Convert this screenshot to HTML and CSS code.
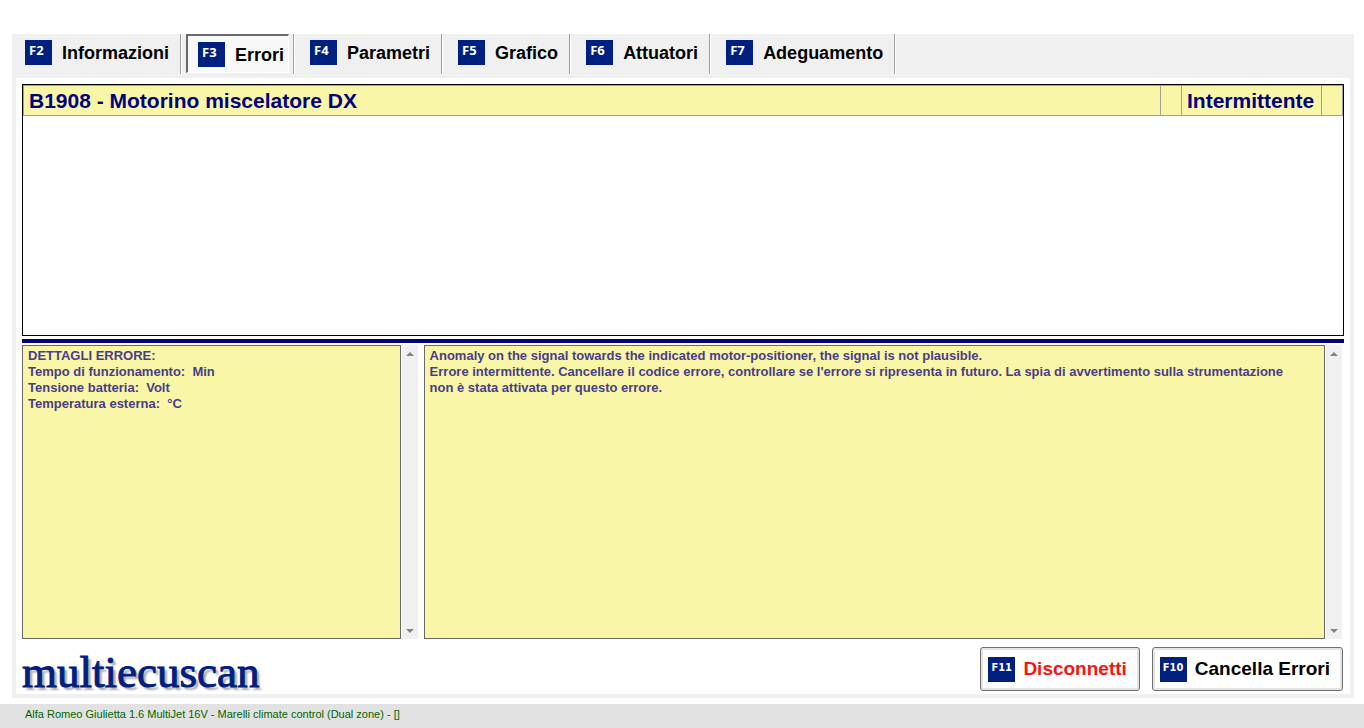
FILE: index.html
```html
<!doctype html>
<html lang="it">
  <head>
    <meta charset="utf-8">
    <title>multiecuscan</title>
    <link rel="stylesheet" href="styles.css">
  </head>
  <body>
    <div class="main">
      <nav class="tabs">
        <div class="tab"><button type="button"><span class="key">F2</span>Informazioni</button></div>
        <div class="tab active"><button type="button"><span class="key">F3</span>Errori</button></div>
        <div class="tab"><button type="button"><span class="key">F4</span>Parametri</button></div>
        <div class="tab"><button type="button"><span class="key">F5</span>Grafico</button></div>
        <div class="tab"><button type="button"><span class="key">F6</span>Attuatori</button></div>
        <div class="tab"><button type="button"><span class="key">F7</span>Adeguamento</button></div>
      </nav>

      <div class="panel">
        <div class="errors">
          <table>
            <tr>
              <td>B1908 - Motorino miscelatore DX</td>
              <td class="small"></td>
              <td class="state">Intermittente</td>
              <td class="small"></td>
            </tr>
          </table>
        </div>

        <div class="line"></div>

        <div class="details">
          <div class="pane left">
            <div class="text">DETTAGLI ERRORE:<br>
              Tempo di funzionamento:&nbsp; Min<br>
              Tensione batteria:&nbsp; Volt<br>
              Temperatura esterna:&nbsp; °C</div>
            <div class="scroll">
              <svg width="8" height="4" viewBox="0 0 8 4"><path d="M4 0L8 4H0z" fill="#858585"/></svg>
              <svg width="8" height="4" viewBox="0 0 8 4"><path d="M0 0H8L4 4z" fill="#858585"/></svg>
            </div>
          </div>
          <div class="pane right">
            <div class="text">Anomaly on the signal towards the indicated motor-positioner, the signal is not plausible.<br>
              Errore intermittente. Cancellare il codice errore, controllare se l'errore si ripresenta in futuro. La spia di avvertimento sulla strumentazione non è stata attivata per questo errore.</div>
            <div class="scroll">
              <svg width="8" height="4" viewBox="0 0 8 4"><path d="M4 0L8 4H0z" fill="#858585"/></svg>
              <svg width="8" height="4" viewBox="0 0 8 4"><path d="M0 0H8L4 4z" fill="#858585"/></svg>
            </div>
          </div>
        </div>

        <div class="bottom">
          <div class="logo">multiecuscan</div>
          <button type="button" class="btn red"><span class="key wide">F11</span>Disconnetti</button>
          <button type="button" class="btn"><span class="key wide">F10</span>Cancella Errori</button>
        </div>
      </div>
    </div>
    <footer>Alfa Romeo Giulietta 1.6 MultiJet 16V - Marelli climate control (Dual zone) - []</footer>
  </body>
</html>
```
FILE: styles.css
```css
*{box-sizing:border-box;}
body{
  margin:0; min-height:100vh;
  display:flex; flex-direction:column;
  background:#fff;
  font-family:"Liberation Sans",Arial,sans-serif;
}
button{
  font-family:inherit; font-weight:bold; color:#000;
  display:flex; align-items:center;
}

.main{
  flex:1;
  display:flex; flex-direction:column;
  margin:34px 10px 6px 12px;
  padding:0 4px 4px;
  background:#f0f0f0;
}

/* tabs */
.tabs{display:flex; height:44px;}
.tab{
  height:40px;
  border-right:1px solid #a0a0a0;
  box-shadow:1px 0 #fff;
}
.tab button{
  height:39px;
  padding:0 11px 0 16px;
  border:0; background:none;
  font-size:18px;
}
.tab:first-child button{padding-left:9px;}
.tab.active{padding:0 4px 0 5px;}
.tab.active button{
  padding:2px 4px 0 10px;
  border:1px solid #fff;
  border-top:2px solid #696969; border-left:2px solid #696969;
  background:#f8f8f8;
}
.key{
  width:27px; height:25px;
  margin-right:10px;
  padding-left:4px;
  background:#00207f; color:#fff;
  font:bold 13px/21px "Noto Sans",sans-serif;
  text-align:left;
}
.tab .key{margin-bottom:2px;}
.key.wide{font:bold 11px/22px "DejaVu Sans Condensed","DejaVu Sans",sans-serif; padding-left:3px;}

.panel{
  flex:1;
  display:flex; flex-direction:column;
  padding:6px 6px 3px;
  background:#fff;
}

/* error list */
.errors{flex:6 0 0; border:1px solid #000;}
.errors table{
  width:100%;
  border-collapse:collapse;
  background:#f9f6a8; color:#000080;
  font-size:21px; font-weight:bold;
}
.errors td{
  height:30px;
  padding:1px 0 0 5px;
  border:1px solid #a0a0a0;
  line-height:24px;
}
.errors .small{width:21px; padding:0;}
.errors .state{width:140px;}

.line{height:4px; margin:3px 0 2px; background:#000080;}

/* details */
.details{flex:7 0 2px; display:flex; gap:6px; margin-bottom:8px;}
.pane{display:flex; gap:1px;}
.left{width:calc(30% - 1px);}
.right{flex:1; margin-right:2px;}
.pane .text{
  flex:1;
  padding:2px 5px;
  border:1px solid #696969;
  background:#f9f6a8; color:#483d8b;
  font-size:13px; font-weight:bold; line-height:16px;
}
.right .text{padding-right:24px;}
.scroll{
  width:16px; padding:7px 0 6px;
  display:flex; flex-direction:column; justify-content:space-between; align-items:center;
  background:#f0f0f0;
}

/* logo and buttons */
.bottom{display:flex; align-items:center; height:44px;}
.logo{
  flex:1;
  padding-top:6px;
  color:#00207f;
  font-family:"Liberation Serif",serif; font-size:45px; line-height:44px;
  -webkit-text-stroke:1px #00207f;
  text-shadow:3px 3px 2px #aaa;
}
.btn{
  height:44px;
  margin:0 1px 0 11px;
  padding:0 12px 0 7px;
  border:1px solid #707070; border-radius:3px;
  background:#fff;
  box-shadow:inset 0 0 0 2px #e4e4e6;
  font-size:19px;
}
.btn .key{margin-right:8px;}
.red{color:#f11;}

footer{
  height:24px;
  padding-left:25px;
  background:#e2e2e2; color:#006400;
  font-size:11px; line-height:21px;
}
```
